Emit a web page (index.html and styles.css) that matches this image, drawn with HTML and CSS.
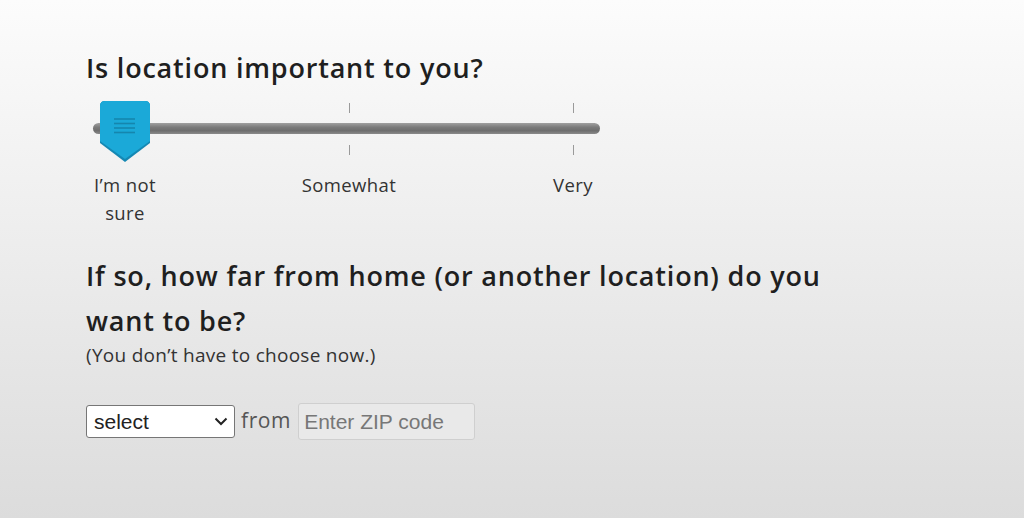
FILE: index.html
```html
<!DOCTYPE html>
<html lang="en">
<head>
<meta charset="utf-8">
<title>Location</title>
<link rel="stylesheet" href="styles.css">
</head>
<body>
<main class="page">
  <h1 class="question q1">Is location important to you?</h1>
  <div class="slider">
    <div class="ticks">
      <span class="tick-col"></span>
      <span class="tick-col"><i class="tick"></i></span>
      <span class="tick-col"><i class="tick"></i></span>
    </div>
    <div class="track"></div>
    <div class="ticks">
      <span class="tick-col"></span>
      <span class="tick-col"><i class="tick"></i></span>
      <span class="tick-col"><i class="tick"></i></span>
    </div>
    <svg class="thumb" width="52" height="64" viewBox="0 0 52 64" aria-hidden="true">
      <path d="M6,1 H46 Q51,1 51,6 V43 L26,62 L1,43 V6 Q1,1 6,1 Z" fill="#1588b3"/>
      <path d="M6,1 H46 Q51,1 51,6 V41 L26,59 L1,41 V6 Q1,1 6,1 Z" fill="#1ba9d8"/>
      <g stroke="#1586ae" stroke-width="1.6">
        <line x1="15" y1="19" x2="36" y2="19"/>
        <line x1="15" y1="23.5" x2="36" y2="23.5"/>
        <line x1="15" y1="28" x2="36" y2="28"/>
        <line x1="15" y1="32.5" x2="36" y2="32.5"/>
      </g>
    </svg>
    <div class="labels">
      <span class="label">I’m not sure</span>
      <span class="label">Somewhat</span>
      <span class="label">Very</span>
    </div>
  </div>
  <h2 class="question q2">If so, how far from home (or another location) do you want to be?</h2>
  <p class="note">(You don’t have to choose now.)</p>
  <div class="form-row">
    <span class="select-wrap">
      <select class="distance">
        <option>select</option>
      </select>
      <svg class="chev" width="14" height="9" viewBox="0 0 14 9" aria-hidden="true">
        <path d="M1.5,1.5 L7,7 L12.5,1.5" fill="none" stroke="#222" stroke-width="2"/>
      </svg>
    </span>
    <span class="from">from</span>
    <input class="zip" type="text" placeholder="Enter ZIP code">
  </div>
</main>
</body>
</html>
```

FILE: styles.css
```css
html, body {
  margin: 0;
  height: 100%;
}
body {
  background: linear-gradient(to bottom, #fcfcfc 0%, #dcdcdc 100%);
  font-family: "Open Sans", Lato, sans-serif;
  color: #222;
}
.page {
  padding: 50px 0 0 86px;
}
.question {
  margin: 0;
  font-size: 27px;
  font-weight: 600;
  line-height: 36px;
  color: #1f1f1f;
  width: 760px;
  letter-spacing: 0.8px;
}
.slider {
  position: relative;
  width: 528px;
  margin-top: 17px;
  margin-left: -1px;
}
.ticks {
  display: flex;
  justify-content: space-between;
  height: 10px;
}
.tick-col {
  width: 80px;
  display: flex;
  justify-content: center;
}
.tick {
  width: 1px;
  height: 10px;
  background: #9a9a9a;
}
.track {
  margin: 10px 0 11px 8px;
  width: 507px;
  height: 11px;
  border-radius: 6px;
  background: linear-gradient(to bottom, #a0a0a0 0%, #7a7a7a 40%, #6e6e6e 70%, #8a8a8a 100%);
}
.thumb {
  position: absolute;
  left: 14px;
  top: -3px;
}
.labels {
  display: flex;
  justify-content: space-between;
  margin-top: 16px;
}
.label {
  width: 80px;
  text-align: center;
  font-size: 18.5px;
  line-height: 28px;
  color: #333;
  padding: 0 4px;
  box-sizing: border-box;
  letter-spacing: 0.4px;
}
.label:nth-child(2) {
  width: 110px;
  margin: 0 -15px;
}
.q2 {
  margin-top: 26px;
  line-height: 45px;
}
.note {
  margin: 0;
  font-size: 19px;
  line-height: 24px;
  color: #333;
  letter-spacing: 0.28px;
}
.form-row {
  display: flex;
  align-items: center;
  gap: 6px;
  margin-top: 36px;
}
.select-wrap {
  position: relative;
  display: inline-flex;
}
.distance {
  appearance: none;
  -webkit-appearance: none;
  width: 149px;
  height: 33px;
  font-family: Arial, "Liberation Sans", sans-serif;
  font-size: 21px;
  color: #222;
  background: #fff;
  border: 1px solid #767676;
  border-radius: 3px;
  padding: 0 7px;
}
.chev {
  position: absolute;
  right: 7px;
  top: 12px;
  pointer-events: none;
}
.from {
  font-size: 21px;
  color: #555;
  margin-top: -3px;
  letter-spacing: 0.6px;
  margin-right: 1px;
}
.zip {
  width: 177px;
  height: 37px;
  box-sizing: border-box;
  font-family: Arial, "Liberation Sans", sans-serif;
  font-size: 21px;
  background: #e9e9e9;
  border: 1px solid #cfcfcf;
  border-radius: 3px;
  padding: 0 5px;
  color: #333;
}
.zip::placeholder {
  color: #777;
}
```
